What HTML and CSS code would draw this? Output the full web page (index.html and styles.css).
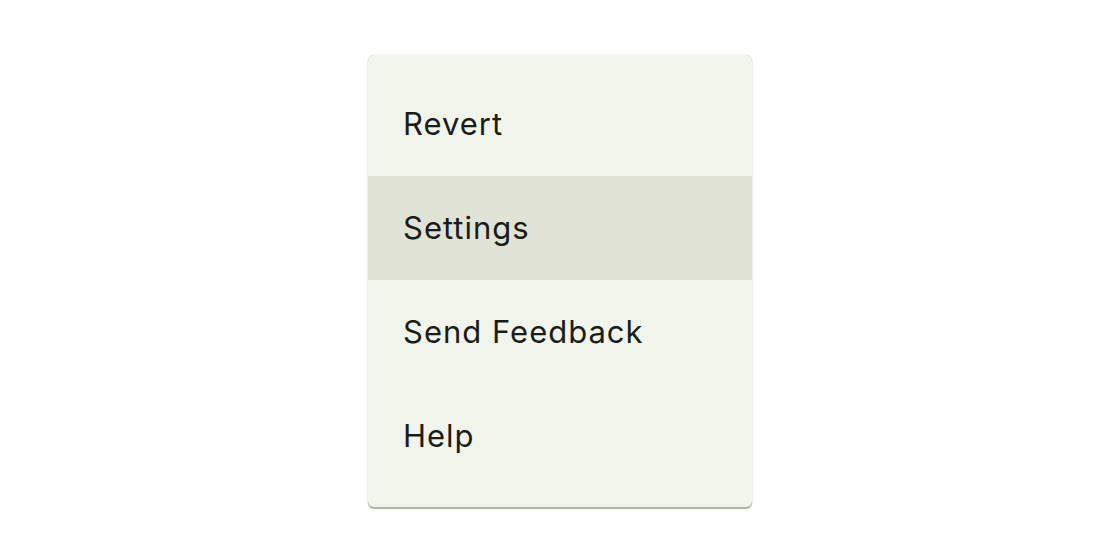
FILE: index.html
```html
<!DOCTYPE html>
<html lang="en">
<head>
<meta charset="utf-8">
<title>Menu</title>
<link rel="stylesheet" href="styles.css">
</head>
<body>
<div class="stage">
  <ul class="menu" role="menu">
    <li class="menu-item" role="menuitem">Revert</li>
    <li class="menu-item is-hovered" role="menuitem">Settings</li>
    <li class="menu-item" role="menuitem">Send Feedback</li>
    <li class="menu-item" role="menuitem">Help</li>
  </ul>
</div>
</body>
</html>
```
FILE: styles.css
```css
html, body {
  margin: 0;
  padding: 0;
  background: #ffffff;
}

.stage {
  width: 1120px;
  height: 560px;
  display: flex;
  justify-content: center;
  align-items: flex-start;
  padding-top: 55px;
  box-sizing: border-box;
}

.menu {
  list-style: none;
  margin: 0;
  padding: 17px 0 19px;
  width: 384px;
  background: #f2f5eb;
  border-radius: 6px;
  box-shadow: 0 2px 1px rgba(110, 140, 90, 0.6), 0 0 1px rgba(90, 110, 80, 0.5);
  display: flex;
  flex-direction: column;
  font-family: Inter, Roboto, "Noto Sans", sans-serif;
  font-size: 31px;
  letter-spacing: 1px;
  color: #1a1c18;
}

.menu-item {
  height: 104px;
  display: flex;
  align-items: center;
  padding: 0 35px 2px;
  box-sizing: border-box;
}

.menu-item.is-hovered {
  background: #e0e3d6;
}
```
